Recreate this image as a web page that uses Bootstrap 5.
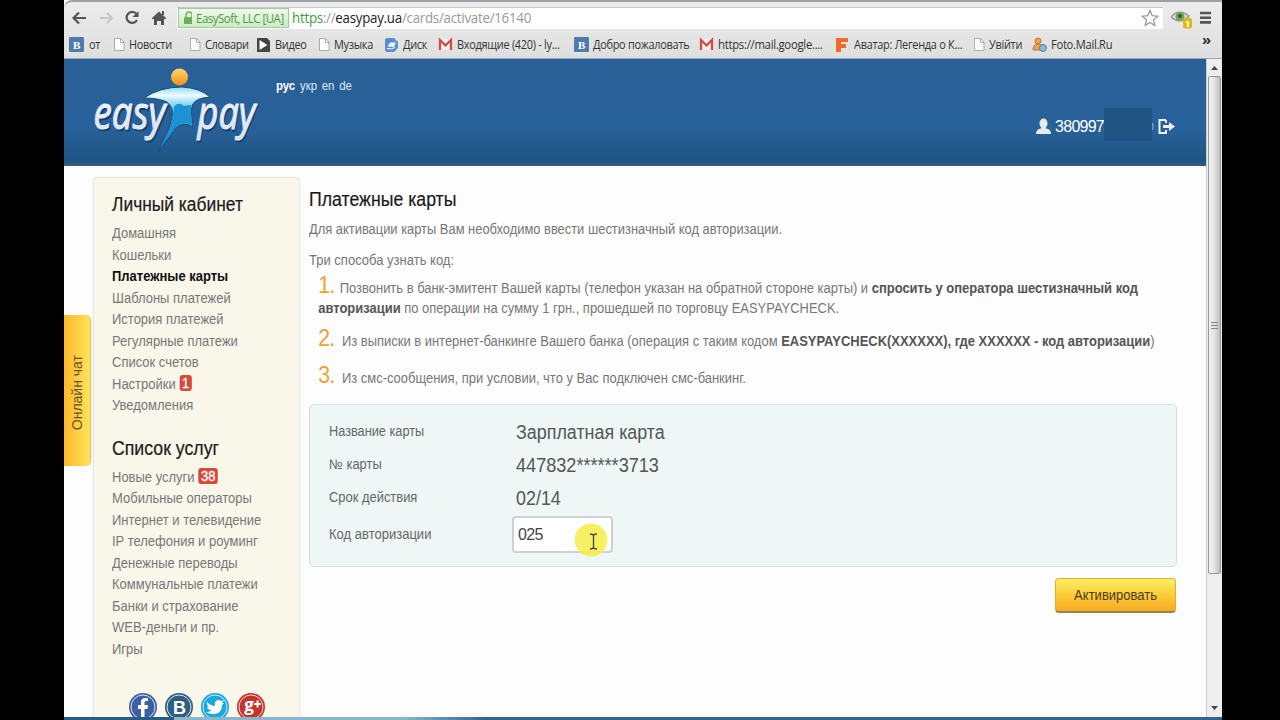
<!DOCTYPE html>
<html lang="ru">
<head>
<meta charset="utf-8">
<title>EasyPay – Платежные карты</title>
<link href="https://cdn.jsdelivr.net/npm/bootstrap@5.3.0/dist/css/bootstrap.min.css" rel="stylesheet">
<style>
body{background:#000;width:1280px;height:720px;overflow:hidden;font-family:"Liberation Sans",Arial,sans-serif;font-size:14px;color:#777}
/* condensed text: scaled horizontally from its left edge */
.sq,.bm span,.url,.side h2,.side ul,.main h1,.main p,.way,.panel .line>span,.panel strong{transform:scaleX(var(--x,.923));transform-origin:0 50%}
.browser{width:1158px;height:720px;margin-left:64px;background:#fdfdfd;overflow:hidden}
.chrome{height:59px;background:linear-gradient(#ececec,#dfdfdf);border-top:2px solid #9da1a6;border-bottom:1px solid #8fa9c0;border-radius:8px 0 0 0;font-family:"Open Sans","Noto Sans",sans-serif;color:#333}
.chrome-row{height:27px;padding:4px 8px 0 7px}
.omni{width:986px;height:22px;background:#fff;border-top:1px solid #c4c4c4;font-size:14px;line-height:20px;white-space:nowrap;margin-left:8px}
.cert{height:20px;width:111px;margin-left:1px;background:linear-gradient(#eefaea,#cdebc6);border:1px solid #9dce94;color:#4d9a44;font-size:12px;line-height:19px;padding-left:4px}
.cert span{letter-spacing:-.5px;margin-left:4px;--x:.955}
.url{margin-left:3px;color:#999;letter-spacing:-.28px;--x:.952}
.url b{font-weight:400;color:#222}.url i{font-style:normal;color:#3f9b41}
.bm{height:30px;font-size:12px;padding:1px 0 0 5px;white-space:nowrap}
.bm>div{display:flex;align-items:center;gap:4px;flex:none;width:var(--w);letter-spacing:-.3px;--x:.91}
.bm svg{flex:none}
.view{height:658px;overflow:hidden;flex:none}
.site{width:1143px;background:#fdfdfd;border-right:1px solid #ccc}
.site-head{height:107px;background:linear-gradient(#2a6096 0,#28609a 65%,#1d5583 96%,#3b5b77 100%);color:#fff}
.logo{margin:5px 0 0 26px}
.lang{margin:20px 0 0 16px;font-size:12px;line-height:14px;gap:5px;color:#dde8f2;--x:.95;width:80px}
.lang b{color:#fff}
.account{margin:49px 30px 0 auto;height:33px;font-size:16px;letter-spacing:-.75px}
.account span:not(.mask),.account svg{margin-top:4px}
.mask{width:48px;height:33px;background:#1f5482}
.side{width:207px;height:541px;margin:11px 0 0 29px;background:#f9f6ea;border:1px solid #eae7dc;border-bottom:0;border-radius:5px 5px 0 0;padding:12px 0 0 18px;box-shadow:0 0 3px #eee}
.side h2,.main h1{font-size:20px;color:#1b1b1b;font-weight:400;margin:0;line-height:28px;white-space:nowrap;-webkit-text-stroke:.2px #1b1b1b;--x:.885}
.side h2.first{--x:.87}
.side ul{margin:5px 0 0;line-height:21.5px;white-space:nowrap;--x:.928}
.side li{height:21.5px}
.side h2+ul+h2{margin-top:17px}
.now{color:#111;font-weight:700}
.num{display:inline-block;background:#d9483c;color:#fff;border-radius:3px;height:16px;line-height:16px;padding:0 3px;font-size:14px;vertical-align:1px;-webkit-text-stroke:.3px #fff}
.social{margin:33px 0 0 17px;gap:8px}
.main{width:868px;margin:19px 0 0 9px}
.main p,.way{white-space:nowrap;margin:0;line-height:20px}
.way{padding-left:10px;--x:.9255}
.way em{font-style:normal;font-size:23px;color:#f0a22d;line-height:0;letter-spacing:-1px;margin-right:6px}
.way em.wide{margin-right:4.500px}
.way b{color:#555}
.panel{height:163px;border:1px solid #d3dfe2;border-radius:5px;background:#eef7f5;margin-top:16px;padding:10px 0 0 19px;color:#666}
.panel .line{height:33px}
.panel .line>span{width:187px;margin-right:0}
.panel .line strong{font-weight:400;font-size:20px;color:#555;--x:.895}
.code{width:101px;height:37px;border:2px solid #cfcfd8;border-radius:4px;background:#fff;font-size:16px;color:#444;padding:0 4px;line-height:33px;margin-left:-4px;letter-spacing:-.6px}
.halo{left:61px;top:5px}
.go{width:121px;height:35px;margin:11px 1px 0 0;background:linear-gradient(#fdf060,#fbc936 55%,#f7ab24);border:1px solid #e0ad3a;border-bottom:2px solid #a08048;border-radius:4px;color:#4b3b12;font-size:14px;line-height:31px;padding:0}
.go span{display:inline-block;transform:scaleX(.93)}
.chat{left:0;top:256px;width:27px;height:151px;background:linear-gradient(90deg,#fdb62d,#fee45a);border-radius:0 5px 5px 0;color:#66532a;border-right:1px solid #e3bd55;padding-top:4px}
.chat span{writing-mode:vertical-rl;transform:rotate(180deg);font-size:14px;line-height:27px;white-space:nowrap}
.scroll{width:15px;background:#eee}
.thumb{width:13px;height:498px;background:linear-gradient(90deg,#f3f3f3,#e2e2e2 50%,#bcbcbc);border:1px solid #999;border-radius:2px}
.task{height:3px;background:linear-gradient(90deg,#285c87 0 110px,#8bb5cc 110px 340px,#35638d 420px)}
</style>
</head>
<body>
<svg width="0" height="0" class="position-absolute"><defs>
<g id="doc"><path d="M1.500 1.500h6l3.500 3.500v8.500h-9.500z" fill="#fff" stroke="#aaa"/><path d="M7.500 1.500v4h4" fill="none" stroke="#aaa"/></g>
<g id="vk"><rect width="15" height="15" rx="1" fill="#4f7ca8"/><text x="7.500" y="11.500" text-anchor="middle" font-family="Liberation Serif" font-size="11" font-weight="700" fill="#fff">B</text></g>
<g id="gm"><path d="M1 2h13v11H1z" fill="#f5efef"/><path d="M2 13V3l5.500 5.500L13 3v10" fill="none" stroke="#d14b45" stroke-width="2.200"/></g>
</defs></svg>
<div class="browser d-flex flex-column">
 <div class="chrome flex-shrink-0">
  <div class="chrome-row d-flex align-items-center">
   <svg width="98" height="20" viewBox="0 0 98 20" fill="none" stroke="#555" stroke-width="2.200"><path d="M15 10H3M8 4.500 2.500 10 8 15.500"/><path d="M29 10h12M36 5l5 5-5 5" stroke="#c8c8c8"/><path d="M65 5.500a5.500 5.500 0 1 0 1 6.500"/><path d="M67.500 3v6h-6z" fill="#555" stroke="none"/><path d="m81 10 7-6.500 7 6.500v1h-2v6h-3v-4h-4v4h-3v-6h-2zM91 3h2v4h-2z" fill="#555" stroke="none"/></svg>
   <div class="omni d-flex align-items-center">
    <div class="cert d-flex align-items-center"><svg width="12" height="14"><path d="M3 6V4a3 3 0 0 1 6 0v2" fill="none" stroke="#86b77c" stroke-width="1.800"/><rect x="1" y="6" width="10" height="7" rx="1" fill="#69b356"/></svg><span class="sq">EasySoft, LLC [UA]</span></div>
    <div class="url"><i>https</i>://<b>easypay.ua</b>/cards/activate/16140</div>
    <svg class="ms-auto me-1" width="18" height="18"><path d="m9 1.500 2.200 5.200 5.600.5-4.300 3.700 1.300 5.500L9 13.500l-4.800 2.900 1.300-5.500-4.300-3.700 5.600-.5z" fill="#fff" stroke="#999" stroke-width="1.300"/></svg>
   </div>
   <svg class="ms-2" width="24" height="22"><path d="M0 10Q8 1 18 9 10 18 0 10z" fill="#ddd" stroke="#999" stroke-width="1.500"/><circle cx="9" cy="9.500" r="4.500" fill="#7da05c"/><circle cx="9" cy="9" r="2" fill="#263"/><rect x="12" y="11" width="9" height="10.500" rx="2" fill="#d5bd18"/><text x="16.500" y="19.500" font-size="9" font-weight="700" fill="#fff" text-anchor="middle">1</text></svg>
   <svg class="ms-1" width="14" height="16"><path d="M1 3h11M1 7.700h11M1 12.400h11" stroke="#555" stroke-width="2.600"/></svg>
  </div>
  <div class="bm d-flex">
   <div style="--w:44px"><svg width="16" height="15"><use href="#vk"/></svg><span>от</span></div>
   <div style="--w:76px"><svg width="12" height="15"><use href="#doc"/></svg><span>Новости</span></div>
   <div style="--w:67px"><svg width="12" height="15"><use href="#doc"/></svg><span>Словари</span></div>
   <div style="--w:62px"><svg width="15" height="16"><path d="M1 1h10l3 3v11H1z" fill="#444"/><path d="m3.500 3 8 5-8 5z" fill="#fff"/></svg><span>Видео</span></div>
   <div style="--w:66px"><svg width="12" height="15"><use href="#doc"/></svg><span>Музыка</span></div>
   <div style="--w:54px"><svg width="15" height="16"><path d="M1 3q0-2 2-2h7l4 4v6l-4 4H3q-2 0-2-2z" fill="#5b8fcf"/><path d="M3.500 9.500 6 5.500h6l-2 4.500z" fill="#eaf4ff"/><path d="M3 11.500q5 1 8-1" fill="none" stroke="#fff"/></svg><span>Диск</span></div>
   <div style="--w:136px"><svg width="15" height="15"><use href="#gm"/></svg><span>Входящие (420) - ly...</span></div>
   <div style="--w:125px"><svg width="15" height="15"><use href="#vk"/></svg><span>Добро пожаловать</span></div>
   <div style="--w:136px"><svg width="15" height="15"><use href="#gm"/></svg><span style="--x:.945">https://mail.google....</span></div>
   <div style="--w:138px"><svg width="15" height="16"><path d="M1 1h12v4H6v2h5v4H6v4H1z" fill="#f06a2a"/></svg><span>Аватар: Легенда о К...</span></div>
   <div style="--w:59px"><svg width="12" height="15"><use href="#doc"/></svg><span>Увійти</span></div>
   <div style="--w:170px"><svg width="15" height="16"><circle cx="6" cy="4" r="3" fill="#f1a14f" stroke="#c3742e"/><path d="M1 13q0-6 5-6t5 6z" fill="#f1a14f" stroke="#c3742e"/><circle cx="11" cy="11" r="3.500" fill="#89b9dd" stroke="#567f9e"/></svg><span style="--x:.93">Foto.Mail.Ru</span></div>
   <b style="margin-top:-2px;font-size:15px">»</b>
  </div>
 </div>
 <div class="view d-flex position-relative">
  <div class="site">
   <header class="site-head d-flex align-items-start">
    <svg class="logo" width="170" height="94" viewBox="90 64 170 94">
     <defs><linearGradient id="ball" x2="0" y2="1"><stop stop-color="#ffd56b"/><stop offset="1" stop-color="#ee9217"/></linearGradient><linearGradient id="man" x2="0" y2="1"><stop offset="0" stop-color="#8fdcf6"/><stop offset=".13" stop-color="#eefbff"/><stop offset=".3" stop-color="#6fcdf0"/><stop offset="1" stop-color="#0d82c2"/></linearGradient><linearGradient id="word" x2="0" y2="1"><stop stop-color="#fff"/><stop offset="1" stop-color="#cfdcee"/></linearGradient></defs>
     <circle cx="179.500" cy="77" r="8.500" fill="url(#ball)"/>
     <path d="M144 98Q160 87 182 87 200 88 210 97 196 98 193 104 190 108 193 127 184 121 176 128 168 138 158 152 170 130 172 117 174 108 167 102 158 98 144 98z" fill="url(#man)" stroke="#174c7c"/>
     <path d="M174 107q4-6 10-1l7-1q-1 5 1.500 20-9-4-17 3-8 10-16 21 11-20 13-31z" fill="#1a93d2"/>
     <g font-family="Open Sans" font-style="italic" font-size="46" fill="#153f6b" stroke="#153f6b"><text x="95" y="130.500" textLength="72" lengthAdjust="spacingAndGlyphs">easy</text><text x="198.500" y="130.500" textLength="58" lengthAdjust="spacingAndGlyphs">pay</text></g>
     <g font-family="Open Sans" font-style="italic" font-size="46" fill="url(#word)" stroke="#e6eef8" stroke-width="1.100"><text x="93.500" y="129" textLength="72" lengthAdjust="spacingAndGlyphs">easy</text><text x="197.500" y="129" textLength="58" lengthAdjust="spacingAndGlyphs">pay</text></g>
    </svg>
    <div class="lang d-flex sq"><b>рус</b><span>укр</span><span>en</span><span>de</span></div>
    <div class="account d-flex align-items-center">
     <svg class="me-1" width="15" height="17"><ellipse cx="7.500" cy="5.500" rx="4" ry="5" fill="#e9ebeb"/><path d="M0 16q0-5 5-5.500V8h5v2.500q5 .5 5 5.500z" fill="#e9ebeb"/></svg>
     <span>380997</span><span class="mask"></span>
     <svg width="24" height="17" viewBox="0 0 24 17"><path d="M.5 5q1 3.500 0 7" stroke="#9bb6cf" fill="none"/><path d="M14 2H7.500v13H14v-3M14 5V2" fill="none" stroke="#edf3f8" stroke-width="2"/><path d="M11 7h6V4l6 4.500-6 4.500v-3h-6z" fill="#edf3f8"/></svg>
    </div>
   </header>
   <div class="d-flex">
    <nav class="side flex-shrink-0">
     <h2 class="first">Личный кабинет</h2>
     <ul class="list-unstyled"><li>Домашняя</li><li>Кошельки</li><li class="now">Платежные карты</li><li>Шаблоны платежей</li><li>История платежей</li><li>Регулярные платежи</li><li>Список счетов</li><li>Настройки <span class="num">1</span></li><li>Уведомления</li></ul>
     <h2>Список услуг</h2>
     <ul class="list-unstyled"><li>Новые услуги <span class="num">38</span></li><li>Мобильные операторы</li><li>Интернет и телевидение</li><li>IP телефония и роуминг</li><li>Денежные переводы</li><li>Коммунальные платежи</li><li>Банки и страхование</li><li>WEB-деньги и пр.</li><li>Игры</li></ul>
     <div class="social d-flex">
      <svg width="28" height="28"><circle cx="14" cy="14" r="14" fill="#3f5fa4"/><circle cx="14" cy="14" r="12" fill="#3f5fa4" stroke="#dce4f2"/><path d="M12 25v-9H9v-4h3V9q0-4 5-4h2v3h-2q-1.500 0-1.500 1.500V12H19l-.5 4h-3v9z" fill="#fff"/></svg>
      <svg width="28" height="28"><circle cx="14" cy="14" r="14" fill="#315d80"/><circle cx="14" cy="14" r="12" fill="#315d80" stroke="#dce4f2"/><text x="14.500" y="21" text-anchor="middle" font-size="18" font-weight="700" fill="#fff">B</text></svg>
      <svg width="28" height="28"><circle cx="14" cy="14" r="14" fill="#18a9df"/><circle cx="14" cy="14" r="12" fill="#18a9df" stroke="#dce4f2"/><path d="M6 9q4 4 8 4-1-5 3-6 2 0 3 1l3-1-2 3 2 0-2 2q0 9-9 9-4 0-7-2 4 0 5-2-3 0-4-3h2q-3-2-2-5z" fill="#fff"/></svg>
      <svg width="28" height="28"><circle cx="14" cy="14" r="14" fill="#c6342c"/><circle cx="14" cy="14" r="12" fill="#c6342c" stroke="#f0dcd8"/><text x="12" y="17.500" text-anchor="middle" font-family="Open Sans" font-size="17" font-weight="700" fill="#fff">g</text><path d="M17 11h7M20.500 7.500v7" stroke="#fff" stroke-width="2"/></svg>
     </div>
    </nav>
    <main class="main">
     <h1>Платежные карты</h1>
     <p style="margin-top:6px;--x:.921">Для активации карты Вам необходимо ввести шестизначный код авторизации.</p>
     <p style="margin-top:11px;--x:.93">Три способа узнать код:</p>
     <div class="way" style="margin-top:8px"><em>1.</em><span>Позвонить в банк-эмитент Вашей карты (телефон указан на обратной стороне карты) и <b>спросить у оператора шестизначный код</b></span><br><span><b>авторизации</b> по операции на сумму 1 грн., прошедшей по торговцу EASYPAYCHECK.</span></div>
     <div class="way" style="margin-top:13px"><em class="wide">2.</em> <span>Из выписки в интернет-банкинге Вашего банка (операция с таким кодом <b>EASYPAYCHECK(XXXXXX), где XXXXXX - код авторизации</b>)</span></div>
     <div class="way" style="margin-top:17px"><em class="wide">3.</em> <span>Из смс-сообщения, при условии, что у Вас подключен смс-банкинг.</span></div>
     <section class="panel">
      <div class="line d-flex align-items-center"><span style="--x:.91">Название карты</span><strong>Зарплатная карта</strong></div>
      <div class="line d-flex align-items-center"><span>№ карты</span><strong style="--x:.905">447832******3713</strong></div>
      <div class="line d-flex align-items-center"><span>Срок действия</span><strong>02/14</strong></div>
      <div class="d-flex align-items-center line" style="margin-top:4px"><span style="--x:.93">Код авторизации</span><div class="code position-relative">025<svg class="halo position-absolute" width="34" height="36"><circle cx="16" cy="17" r="16.500" fill="#f5ef48" fill-opacity=".85"/><path d="M15 11q3 0 3.500 1.500Q19 11 22 11M15 26q3 0 3.500-1.500Q19 26 22 26M18.500 12v13" fill="none" stroke="#444" stroke-width="1.300"/></svg></div></div>
     </section>
     <div class="d-flex justify-content-end"><button class="btn go"><span>Активировать</span></button></div>
    </main>
   </div>
  </div>
  <div class="chat position-absolute d-flex align-items-center justify-content-center"><span>Онлайн чат</span></div>
  <div class="scroll d-flex flex-column align-items-center justify-content-between">
   <div><svg class="d-block" width="13" height="17"><path d="m3 11 3.500-4 3.500 4z" fill="#444"/></svg><div class="thumb d-flex align-items-center justify-content-center"><svg width="7" height="9"><path d="M0 1.500h7M0 4.500h7M0 7.500h7" stroke="#888"/></svg></div></div>
   <svg width="13" height="17"><path d="m3 6 3.500 4L10 6z" fill="#444"/></svg>
  </div>
 </div>
 <div class="task"></div>
</div>
<script src="https://cdn.jsdelivr.net/npm/bootstrap@5.3.0/dist/js/bootstrap.bundle.min.js"></script>
</body>
</html>
